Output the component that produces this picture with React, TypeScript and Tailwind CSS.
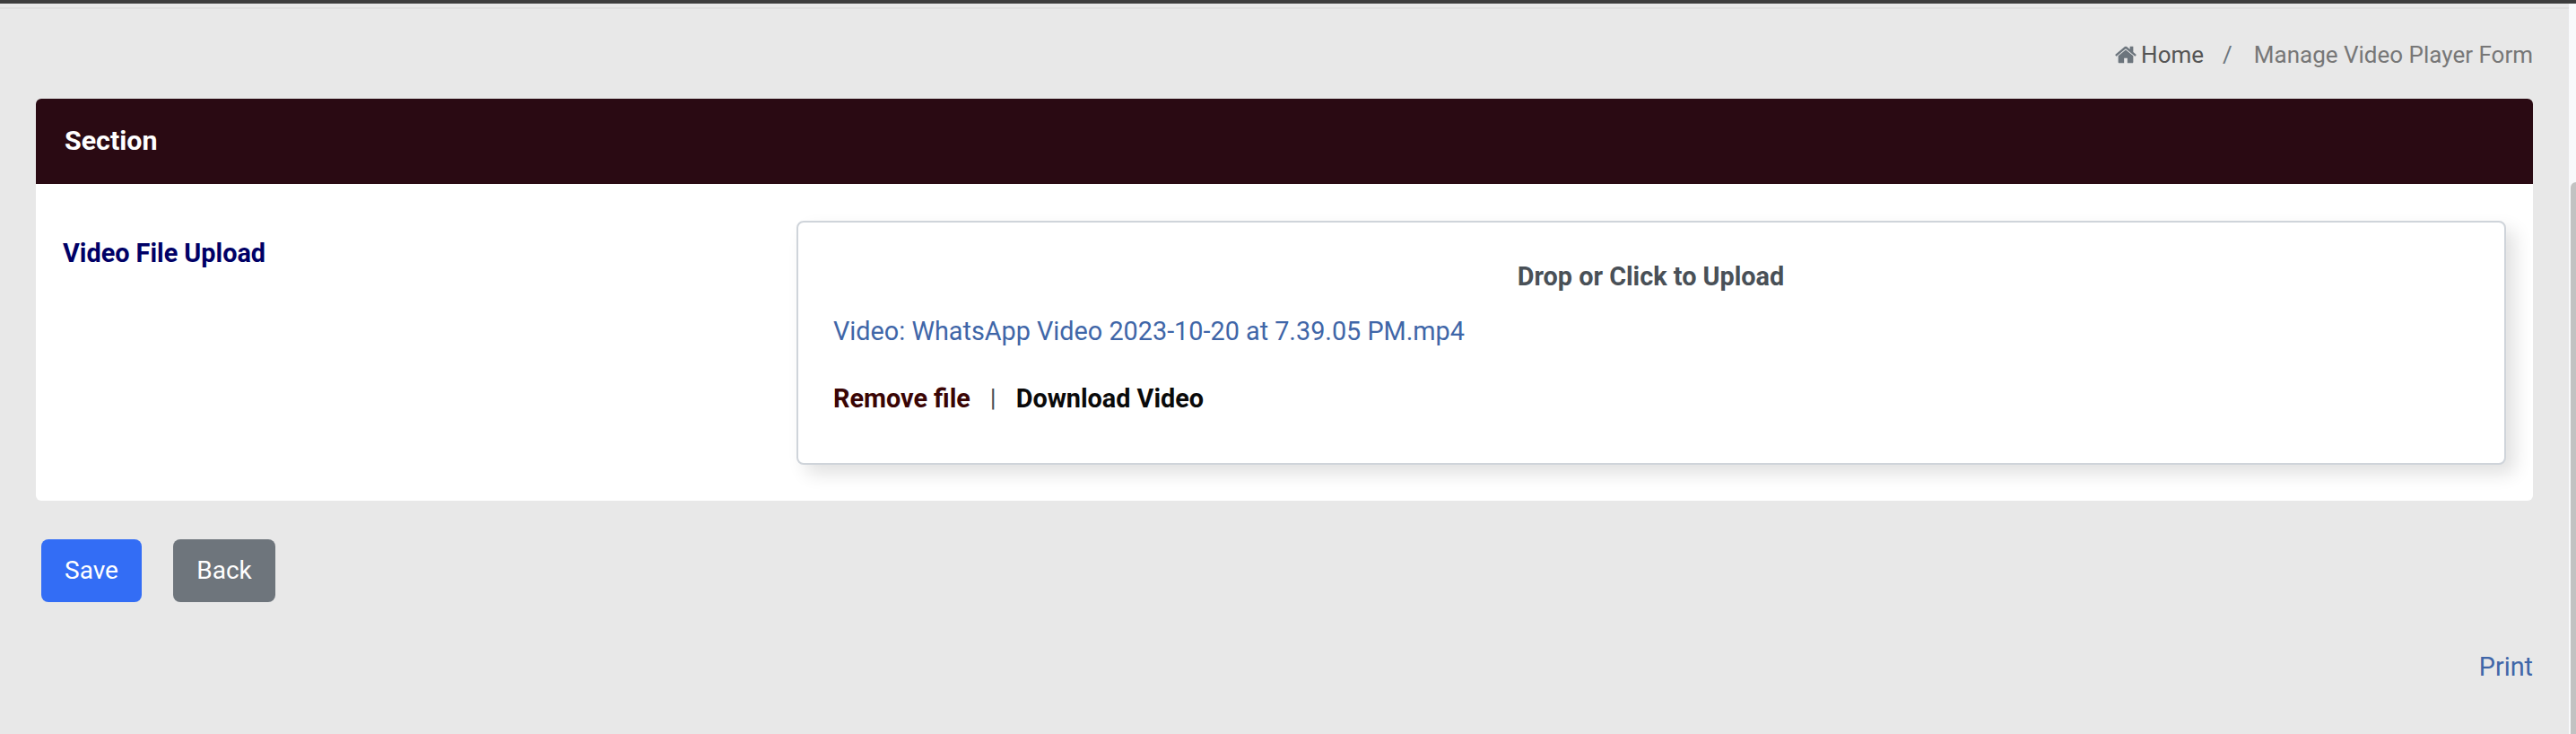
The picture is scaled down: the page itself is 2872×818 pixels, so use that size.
import React from 'react';

const HomeIcon: React.FC = () => (
  <svg viewBox="0 0 1792 1792" className="w-[26px] h-[26px] fill-[#6c757d] mr-[4px]">
    <path d="M1472 992v480q0 26-19 45t-45 19h-384v-384h-256v384h-384q-26 0-45-19t-19-45v-480q0-1 .5-3t.5-3l575-474 575 474q1 2 1 6zm223-69l-62 74q-8 9-21 11h-3q-13 0-21-7l-692-577-692 577q-12 8-24 7-13-2-21-11l-62-74q-8-10-7-23.500t11-21.500l719-599q32-26 76-26t76 26l244 204v-195q0-14 9-23t23-9h192q14 0 23 9t9 23v408l219 182q10 8 11 21.500t-7 23.500z" />
  </svg>
);

const App: React.FC = () => {
  return (
    <div className="h-[818px] w-[2872px] overflow-hidden flex flex-col bg-[#e8e8e8] font-['Roboto',sans-serif]">
      {/* Top bar */}
      <div className="h-[4px] shrink-0 bg-[#3d3d3d]" />

      <div className="flex flex-1 min-h-0">
        <main className="flex-1 min-w-0 flex flex-col">
          <div className="h-[4px] shrink-0" />
          <div className="h-[2px] shrink-0 bg-[#dfdfdf]" />

          {/* Breadcrumb */}
          <nav className="h-[100px] shrink-0 pr-[40px] pt-[2px] flex items-center justify-end text-[26px] leading-none">
            <HomeIcon />
            <span className="text-[#555555]">Home</span>
            <span className="ml-[21px] mr-[24px] text-[#6c757d]">/</span>
            <span className="text-[#777777]">Manage Video Player Form</span>
          </nav>

          <div className="pl-[40px] pr-[40px]">
            {/* Section card */}
            <section className="rounded-[6px] overflow-hidden bg-white">
              <header className="h-[95px] pl-[32px] pb-[2px] flex items-center bg-[#2a0a13] text-white text-[30.4px] font-bold">
                Section
              </header>
              <div className="flex pt-[41px] pb-[40px] pr-[30px]">
                <label className="w-[848px] shrink-0 pl-[30px] pt-[15px] text-[28.8px] leading-[42px] font-bold text-[#000066]">
                  Video File Upload
                </label>
                <div className="flex-1 h-[272px] bg-white border-2 border-[#cfd4da] rounded-[8px] shadow-[10px_10px_20px_rgba(0,0,0,0.12)] pl-[39px] pr-[40px] pt-[40px]">
                  <div className="text-center text-[28.8px] leading-[40px] font-bold text-[#495057]">
                    Drop or Click to Upload
                  </div>
                  <div className="mt-[21px] text-[28.8px] leading-[40px] text-[#3f66a8]">
                    Video: WhatsApp Video 2023-10-20 at 7.39.05 PM.mp4
                  </div>
                  <div className="mt-[35px] flex items-center text-[28.8px] leading-[40px] font-bold">
                    <span className="text-[#3a0505]">Remove file</span>
                    <span className="mx-[22px] font-normal text-[28px] text-[#495057]">|</span>
                    <span className="text-[#0a0a0a]">Download Video</span>
                  </div>
                </div>
              </div>
            </section>

            {/* Actions */}
            <div className="mt-[43px] pl-[6px] flex gap-[35px]">
              <button className="w-[112px] h-[70px] rounded-[8px] bg-[#336df5] text-white text-[28px]">Save</button>
              <button className="w-[114px] h-[70px] rounded-[8px] bg-[#6e757c] text-white text-[28px]">Back</button>
            </div>

            <div className="mt-[52px] text-right text-[28.8px] leading-[40px] text-[#3f66a8]">Print</div>
          </div>
        </main>

        {/* Scrollbar */}
        <aside className="w-[8px] shrink-0 pl-[2px] bg-[#f8f9fb]">
          <div className="mt-[199px] h-[620px] rounded-tl-[6px] bg-[#c2c2c2]" />
        </aside>
      </div>
    </div>
  );
};

export default App;
